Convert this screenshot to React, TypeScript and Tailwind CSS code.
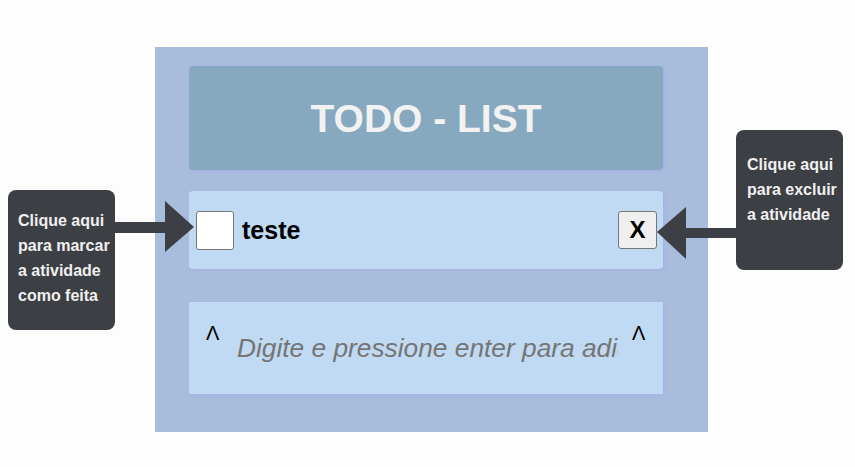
import React from "react";

const font = { fontFamily: '"Liberation Sans", Arial, sans-serif' };

export default function App() {
  return (
    <div
      className="w-full h-[467px] bg-[#fdfdfd] flex items-start overflow-hidden"
      style={font}
    >
      {/* Left tooltip */}
      <div className="relative ml-[8px] mt-[190px] w-[107px] h-[140px] shrink-0 rounded-[8px] bg-[#3c3f44] pl-[10px] pt-[18px] text-[16px] leading-[25px] font-bold text-[#f0f0f0] whitespace-nowrap">
        <div>Clique aqui</div>
        <div>para marcar</div>
        <div>a atividade</div>
        <div>como feita</div>
        <svg
          className="absolute left-[107px] top-[11px]"
          width="80"
          height="51"
          viewBox="0 0 80 51"
        >
          <rect x="0" y="21" width="51" height="11" fill="#3c3f44" />
          <polygon points="50,0 79,26 50,51" fill="#3c3f44" />
        </svg>
      </div>

      {/* Main panel */}
      <div className="ml-[40px] mt-[47px] w-[553px] h-[385px] shrink-0 bg-[#a8bcdb] pl-[34px] pr-[45px] pt-[19px] flex flex-col">
        <div className="h-[104px] rounded-[4px] bg-[#87a9bf] shadow-[1px_1px_3px_#a6b0e8] flex items-center justify-center">
          <span className="text-[39px] font-bold text-[#f2f2f2] leading-none">
            TODO - LIST
          </span>
        </div>

        <div className="mt-[21px] h-[78px] rounded-[4px] bg-[#bfdaf2] shadow-[1px_1px_3px_#a6b0e8] flex items-center pl-[7px] pr-[6px]">
          <div className="w-[38px] h-[39px] rounded-[3px] border border-[#767676] bg-white shrink-0" />
          <span className="ml-[8px] text-[25px] font-bold text-black leading-none">
            teste
          </span>
          <div className="flex-1" />
          <button className="w-[39px] h-[38px] rounded-[3px] border border-[#767676] bg-[#efefef] flex items-center justify-center text-[24px] font-bold text-black leading-none">
            X
          </button>
        </div>

        <div className="mt-[33px] h-[92px] bg-[#bfdaf2] shadow-[1px_1px_3px_#a6b0e8] flex items-start pl-[17px]">
          <span className="mt-[21px] text-[20px] leading-[20px] text-black w-[15px] shrink-0">
            Λ
          </span>
          <input
            className="mt-[26px] ml-[5px] w-[403px] h-[40px] bg-transparent outline-none px-[11px] text-[26.3px] italic text-black placeholder:text-[#757575]"
            style={font}
            placeholder="Digite e pressione enter para adicionar"
          />
          <span className="mt-[21px] ml-[3px] text-[20px] leading-[20px] text-black w-[15px] shrink-0">
            Λ
          </span>
        </div>
      </div>

      {/* Right tooltip */}
      <div className="relative ml-[28px] mt-[130px] w-[107px] h-[140px] shrink-0 rounded-[8px] bg-[#3c3f44] pl-[11px] pt-[22px] text-[16px] leading-[25px] font-bold text-[#f0f0f0] whitespace-nowrap">
        <div>Clique aqui</div>
        <div>para excluir</div>
        <div>a atividade</div>
        <svg
          className="absolute left-[-79px] top-[77px]"
          width="80"
          height="52"
          viewBox="0 0 80 52"
        >
          <rect x="28" y="21" width="52" height="10" fill="#3c3f44" />
          <polygon points="0,25 29,0 29,52" fill="#3c3f44" />
        </svg>
      </div>
    </div>
  );
}
